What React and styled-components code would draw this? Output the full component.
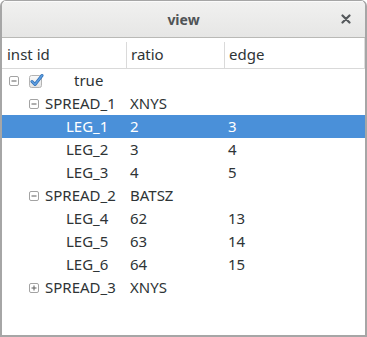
import React from "react"
import styled, { createGlobalStyle } from "styled-components"

const GlobalStyle = createGlobalStyle`
  html, body {
    margin: 0;
    padding: 0;
    background: #ffffff;
  }
  body {
    font-family: "Noto Sans", "DejaVu Sans", sans-serif;
    color: #2e3436;
  }
`

const Window = styled.div`
  width: 367px;
  height: 337px;
  box-sizing: border-box;
  border: 2px solid #a6a6a6;
  border-top-width: 1px;
  border-radius: 6px 6px 0 0;
  display: flex;
  flex-direction: column;
  overflow: hidden;
  background: #ffffff;
`

const TitleBar = styled.div`
  height: 36px;
  flex-shrink: 0;
  display: grid;
  grid-template-columns: 1fr auto 1fr;
  align-items: center;
  background: linear-gradient(#f1f1f0, #e6e6e5);
  border-bottom: 1px solid #b9b9b6;
  box-shadow: inset 0 1px 0 #fbfbfb;
`

const Title = styled.div`
  grid-column: 2;
  font-size: 14px;
  font-weight: bold;
  color: #4f5356;
  padding-top: 1px;
`

const CloseButton = styled.div`
  justify-self: end;
  display: flex;
  align-items: center;
  justify-content: center;
  width: 20px;
  height: 20px;
  margin-right: 9px;
`

const Table = styled.div`
  flex: 1;
  display: flex;
  flex-direction: column;
`

const HeaderRow = styled.div`
  display: grid;
  grid-template-columns: 124px 98px 1fr;
  height: 30px;
  border-bottom: 1px solid #d9d9d9;
  border-right: 1px solid #dddddd;
`

const HeaderCell = styled.div`
  display: flex;
  align-items: center;
  padding-left: ${p => (p.first ? 5 : 4)}px;
  font-size: 15px;
  border-left: ${p => (p.first ? "none" : "1px solid #dadada")};
  margin-top: ${p => (p.first ? 0 : 4)}px;
  padding-top: ${p => (p.first ? 2 : 0)}px;
  padding-bottom: ${p => (p.first ? 0 : 2)}px;
`

const Row = styled.div`
  display: grid;
  grid-template-columns: 124px 98px 1fr;
  height: 23px;
  font-size: 15px;
  line-height: 23px;
  background: ${p => (p.selected ? "#4a90d9" : "transparent")};
  color: ${p => (p.selected ? "#ffffff" : "#2e3436")};
`

const NameCell = styled.div`
  display: flex;
  align-items: center;
  padding-left: ${p => 7 + p.level * 20}px;
  white-space: nowrap;
`

const Cell = styled.div`
  padding-left: 4px;
  white-space: nowrap;
`

const ExpanderSlot = styled.div`
  width: ${p => (p.leaf ? 17 : 16)}px;
  flex-shrink: 0;
  display: flex;
  align-items: center;
  padding-top: 1px;
`

const CheckSlot = styled.div`
  width: 49px;
  flex-shrink: 0;
  display: flex;
  align-items: center;
  padding-left: 3px;
  box-sizing: border-box;
`

function Expander({ open }) {
  return (
    <svg width="10" height="10" viewBox="0 0 10 10">
      <rect x="0.5" y="0.5" width="9" height="9" rx="1.5" fill="#fff" stroke="#a3a3a3" />
      <line x1="2.5" y1="5" x2="7.5" y2="5" stroke="#5c5c5c" strokeWidth="1" />
      {!open && <line x1="5" y1="2.5" x2="5" y2="7.5" stroke="#5c5c5c" strokeWidth="1" />}
    </svg>
  )
}

function Check() {
  return (
    <svg width="16" height="16" viewBox="0 0 16 16">
      <defs>
        <linearGradient id="cb" x1="0" y1="0" x2="0" y2="1">
          <stop offset="0" stopColor="#fafafa" />
          <stop offset="1" stopColor="#e2e2e2" />
        </linearGradient>
      </defs>
      <rect x="1.5" y="2.5" width="12" height="12" rx="2" fill="url(#cb)" stroke="#b3b3b3" />
      <path d="M4 8.5 L7 11.5 L14 2.5" fill="none" stroke="#2f6fb5" strokeWidth="3" strokeLinecap="round" strokeLinejoin="round" />
      <path d="M4 8.5 L7 11.5 L14 2.5" fill="none" stroke="#5d9de0" strokeWidth="1.6" strokeLinecap="round" strokeLinejoin="round" />
    </svg>
  )
}

const rows = [
  { level: 0, name: "true", open: true, check: true },
  { level: 1, name: "SPREAD_1", ratio: "XNYS", open: true },
  { level: 2, name: "LEG_1", ratio: "2", edge: "3", selected: true },
  { level: 2, name: "LEG_2", ratio: "3", edge: "4" },
  { level: 2, name: "LEG_3", ratio: "4", edge: "5" },
  { level: 1, name: "SPREAD_2", ratio: "BATSZ", open: true },
  { level: 2, name: "LEG_4", ratio: "62", edge: "13" },
  { level: 2, name: "LEG_5", ratio: "63", edge: "14" },
  { level: 2, name: "LEG_6", ratio: "64", edge: "15" },
  { level: 1, name: "SPREAD_3", ratio: "XNYS", open: false },
]

export default function App() {
  return (
    <>
      <GlobalStyle />
      <Window>
        <TitleBar>
          <Title>view</Title>
          <CloseButton>
            <svg width="10" height="10" viewBox="0 0 10 10">
              <path d="M1.5 1.5 L8.5 8.5 M8.5 1.5 L1.5 8.5" stroke="#55595c" strokeWidth="2.2" strokeLinecap="round" />
            </svg>
          </CloseButton>
        </TitleBar>
        <Table>
          <HeaderRow>
            <HeaderCell first>inst id</HeaderCell>
            <HeaderCell>ratio</HeaderCell>
            <HeaderCell>edge</HeaderCell>
          </HeaderRow>
          {rows.map((r, i) => {
            const leaf = r.level === 2
            return (
              <Row key={i} selected={r.selected}>
                <NameCell level={r.level}>
                  <ExpanderSlot leaf={leaf}>{!leaf && <Expander open={r.open} />}</ExpanderSlot>
                  {r.check && (
                    <CheckSlot>
                      <Check />
                    </CheckSlot>
                  )}
                  {r.name}
                </NameCell>
                <Cell>{r.ratio}</Cell>
                <Cell>{r.edge}</Cell>
              </Row>
            )
          })}
        </Table>
      </Window>
    </>
  )
}
